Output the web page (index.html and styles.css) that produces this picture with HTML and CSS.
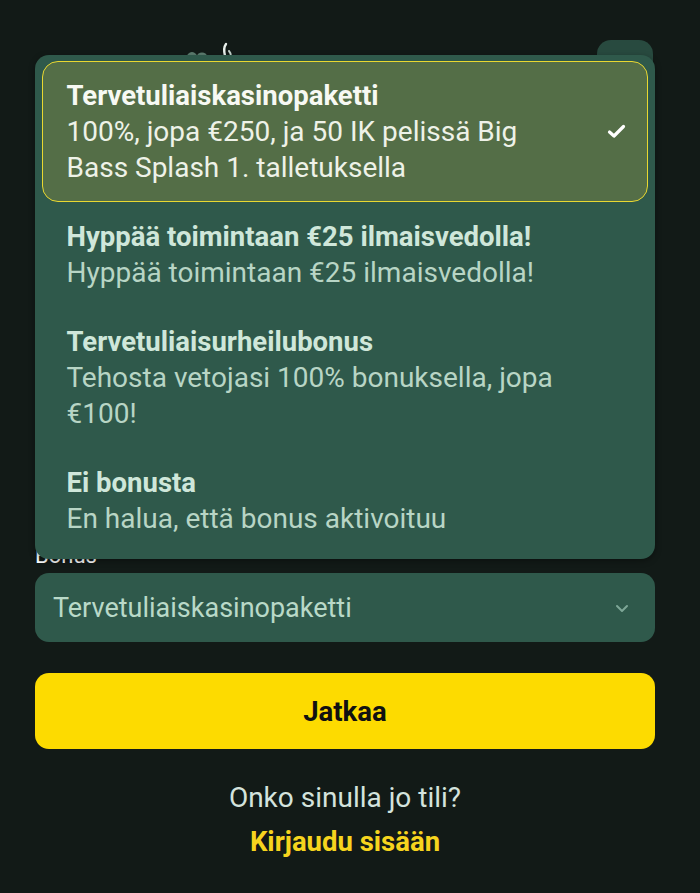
FILE: index.html
```html
<!DOCTYPE html>
<html lang="fi">
<head>
<meta charset="utf-8">
<title>Rekisteröidy</title>
<link rel="stylesheet" href="styles.css">
</head>
<body>
<div class="page">
  <header class="top">
    <svg class="logo" width="70" height="20" viewBox="0 0 70 20">
      <path d="M4 15 q3 -3 6 0" stroke="#5d7d70" stroke-width="3" fill="none" stroke-linecap="round"/>
      <path d="M14 15 q3 -2 6 0" stroke="#5d7d70" stroke-width="3" fill="none" stroke-linecap="round"/>
      <path d="M40 16 q-2 -8 1 -12" stroke="#e9f0ec" stroke-width="2.4" fill="none" stroke-linecap="round"/>
      <path d="M46 17 q0 -4 -2 -6" stroke="#c8d6cf" stroke-width="2" fill="none" stroke-linecap="round"/>
    </svg>
    <div class="menu-btn"></div>
  </header>

  <div class="form">
    <div class="hidden-fields"></div>
    <label class="field-label">Bonus</label>
    <div class="select">
      <span>Tervetuliaiskasinopaketti</span>
      <svg class="chev" width="14" height="10" viewBox="0 0 14 10"><path d="M2 2 L7 7 L12 2" stroke="#7ea797" stroke-width="2" fill="none" stroke-linecap="round" stroke-linejoin="round"/></svg>
    </div>
    <button class="primary">Jatkaa</button>
    <p class="have-account">Onko sinulla jo tili?</p>
    <a class="login">Kirjaudu sisään</a>
  </div>

  <div class="dropdown">
    <div class="option selected">
      <div class="opt-text">
        <div class="opt-title">Tervetuliaiskasinopaketti</div>
        <div class="opt-desc">100%, jopa €250, ja 50 IK pelissä Big Bass Splash 1. talletuksella</div>
      </div>
      <svg class="check" width="19" height="15" viewBox="0 0 19 15"><path d="M2.5 8 L7 12 L16.5 2.5" stroke="#ffffff" stroke-width="3.2" fill="none" stroke-linecap="round" stroke-linejoin="round"/></svg>
    </div>
    <div class="option">
      <div class="opt-text">
        <div class="opt-title">Hyppää toimintaan €25 ilmaisvedolla!</div>
        <div class="opt-desc">Hyppää toimintaan €25 ilmaisvedolla!</div>
      </div>
    </div>
    <div class="option">
      <div class="opt-text">
        <div class="opt-title">Tervetuliaisurheilubonus</div>
        <div class="opt-desc">Tehosta vetojasi 100% bonuksella, jopa €100!</div>
      </div>
    </div>
    <div class="option">
      <div class="opt-text">
        <div class="opt-title">Ei bonusta</div>
        <div class="opt-desc">En halua, että bonus aktivoituu</div>
      </div>
    </div>
  </div>
</div>
</body>
</html>
```

FILE: styles.css
```css
* { box-sizing: border-box; }
html, body { margin: 0; padding: 0; }
body {
  background: #121a17;
  font-family: Roboto, "Noto Sans", sans-serif;
  color: #e8efe9;
  height: 893px;
  overflow: hidden;
}
.page {
  position: relative;
  width: 690px;
  padding: 40px 35px 0 35px;
}
.top {
  display: flex;
  justify-content: space-between;
  align-items: flex-start;
  height: 40px;
}
.logo {
  margin-left: 150px;
}
.menu-btn {
  width: 56px;
  height: 40px;
  border-radius: 14px;
  background: #284a3f;
  margin-right: 2px;
}
.form {
  display: flex;
  flex-direction: column;
}
.hidden-fields {
  height: 463px;
}
.field-label {
  font-size: 22px;
  line-height: 26px;
  color: #ffffff;
  margin-bottom: 4px;
}
.select {
  height: 69px;
  border-radius: 14px;
  background: #2f594b;
  display: flex;
  align-items: center;
  justify-content: space-between;
  padding: 0 26px 0 18px;
  font-size: 27px;
  color: #b9d9c8;
}
.chev { margin-top: 2px; }
.primary {
  margin-top: 31px;
  height: 76px;
  border: none;
  border-radius: 14px;
  background: #fddb00;
  color: #111;
  font-family: Roboto, "Noto Sans", sans-serif;
  font-weight: 700;
  font-size: 27.5px;
}
.have-account {
  margin: 33px 0 0 0;
  text-align: center;
  font-size: 28px;
  line-height: 32px;
  color: #d4e3dd;
}
.login {
  margin-top: 12px;
  text-align: center;
  font-size: 27.5px;
  line-height: 32px;
  font-weight: 700;
  color: #f6d41e;
}

.dropdown {
  position: absolute;
  left: 35px;
  top: 55px;
  width: 620px;
  background: #2f594b;
  border-radius: 14px;
  padding: 6px 7px;
  box-shadow: 0 2px 6px rgba(0,0,0,0.35);
}
.option {
  display: flex;
  align-items: center;
  justify-content: space-between;
  padding: 15.5px 21px 15.5px 23.5px;
  border: 1.5px solid transparent;
  border-radius: 16px;
}
.option.selected {
  background: #546e47;
  border-color: #e9d831;
}
.opt-text {
  width: 500px;
  font-size: 28px;
  line-height: 36px;
}
.opt-title {
  font-weight: 700;
  font-size: 27.5px;
  color: #cfe7da;
}
.opt-desc {
  color: #b8d5c5;
}
.option.selected .opt-title { color: #f7f9f3; }
.option.selected .opt-desc { color: #eef2e8; }
```
